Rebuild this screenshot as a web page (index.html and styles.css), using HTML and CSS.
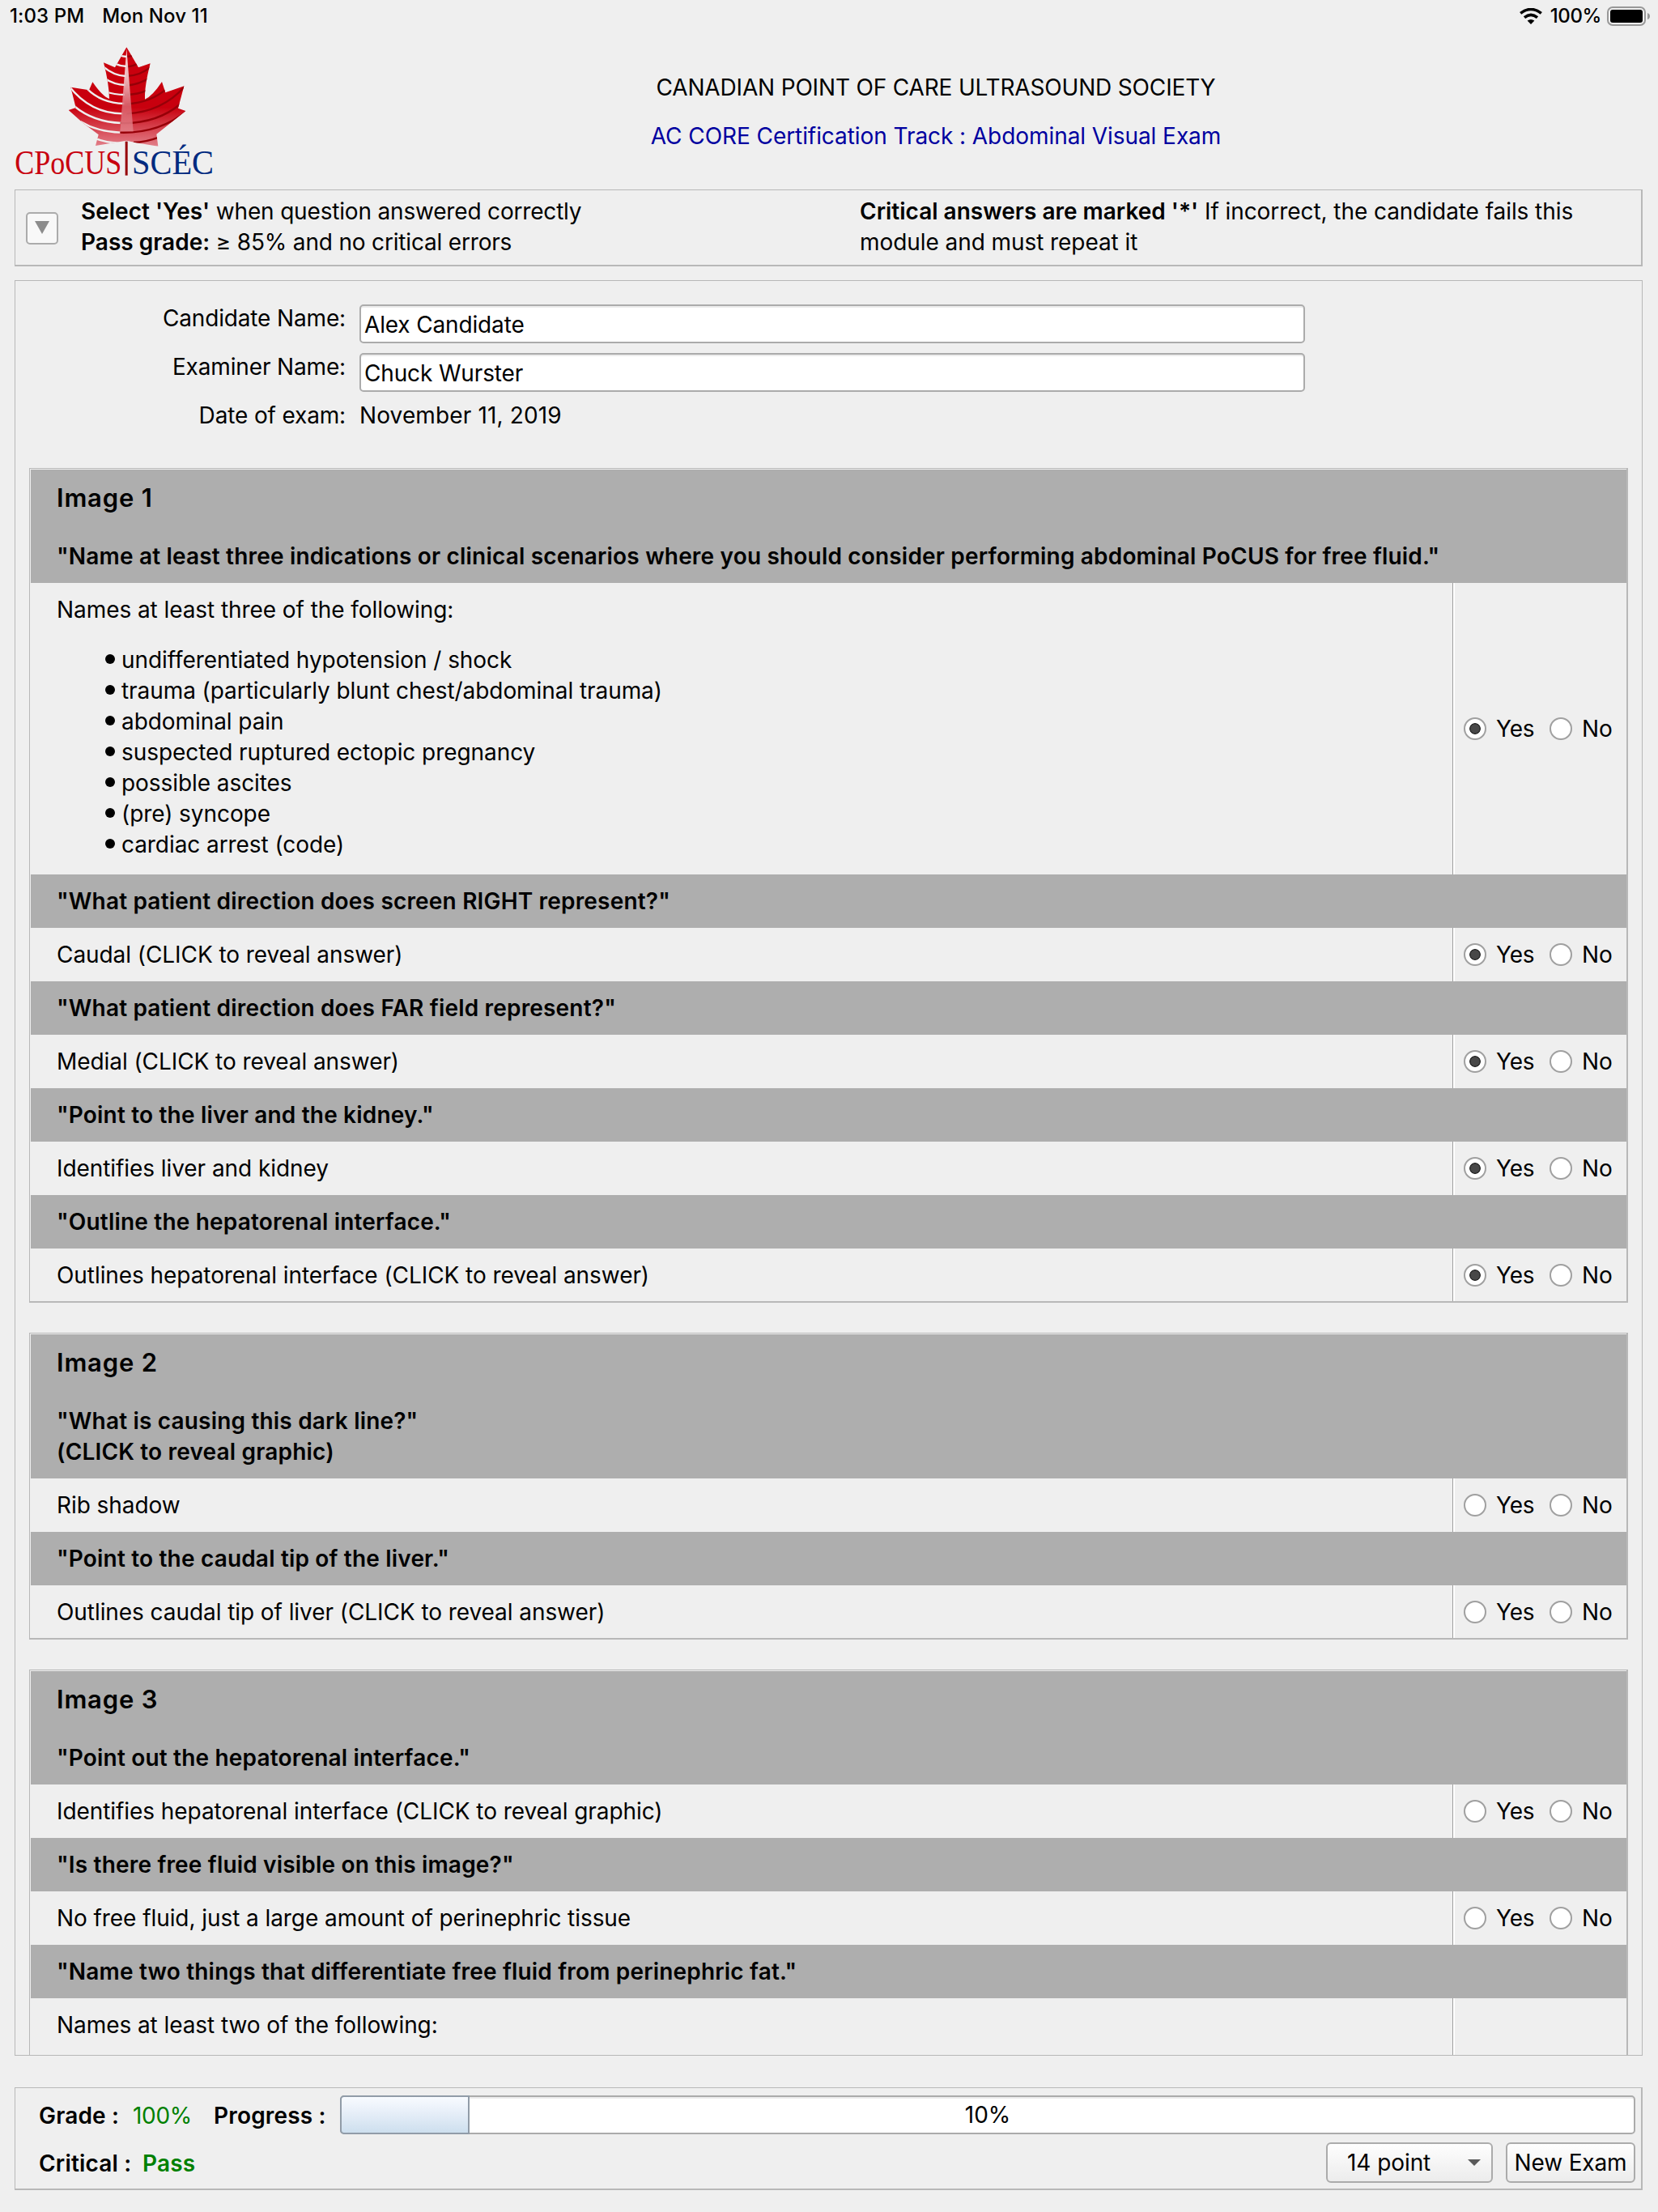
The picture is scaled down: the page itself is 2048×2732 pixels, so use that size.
FILE: index.html
```html
<!DOCTYPE html>
<html lang="en">
<head>
    <meta charset="utf-8">
    <title>Abdominal Visual Exam</title>
    <link rel="stylesheet" href="styles.css">
</head>
<body>
    <div class="status-bar">
        <span class="time">1:03 PM</span>
        <span class="date">Mon Nov 11</span>
        <svg class="wifi" viewBox="0 0 28 20" width="28" height="20">
            <g fill="none" stroke="#000" stroke-width="3.6">
                <path d="M1.2 6.4 Q14 -3.4 26.8 6.4"/>
                <path d="M6 11.7 Q14 5.2 22 11.7"/>
            </g>
            <path d="M9.6 15.6 Q14 12.2 18.4 15.6 L14 20 Z"/>
        </svg>
        <span class="battery-text">100%</span>
        <svg class="battery" viewBox="0 0 54 24" width="54" height="24">
            <rect x="1" y="1" width="46" height="22" rx="6" fill="none" stroke="#989898" stroke-width="2"/>
            <rect x="4" y="4" width="40" height="16" rx="3"/>
            <path d="M50 8 Q53 9 53 12 Q53 15 50 16 Z" fill="#989898"/>
        </svg>
    </div>

    <div class="header">
        <svg class="logo" viewBox="0 150 810 540" width="270" height="180">
            <defs>
                <linearGradient id="leafRed" x1="0" y1="0" x2="0" y2="1">
                    <stop offset="0" stop-color="#cb000e"/>
                    <stop offset="0.6" stop-color="#c8000e"/>
                    <stop offset="0.98" stop-color="#e2808a"/>
                </linearGradient>
                <linearGradient id="beam" x1="0" y1="0" x2="0" y2="1">
                    <stop offset="0" stop-color="#fff"/>
                    <stop offset="0.35" stop-color="#f3d8da"/>
                    <stop offset="0.7" stop-color="#db6670"/>
                    <stop offset="1" stop-color="#e28088"/>
                </linearGradient>
                <clipPath id="leaf">
                    <path d="M469 175 L513 250 L557 235 Q535 320 537 368 Q565 356 600 303 L613 343 L682 319 L660 401 L688 411 L580 497 L586 542 L500 528 L469 521 L413 530 L354 540 L365 499 L307 455 L254 408 L281 399 L262 323 L330 334 L343 304 Q380 358 405 366 Q404 310 384 232 L426 250 Z"/>
                </clipPath>
            </defs>
            <g clip-path="url(#leaf)">
                <rect x="250" y="170" width="440" height="380" fill="url(#leafRed)"/>
                <g fill="none" stroke="#efefef" stroke-width="7">
                    <path d="M440 203 Q455 210 469 210"/>
                    <path d="M425 236 Q448 246 469 246"/>
                    <path d="M380 245 Q422 281 466 282"/>
                    <path d="M385 289 Q424 315 464 315"/>
                    <path d="M390 339 Q424 351 462 351"/>
                    <path d="M322 328 Q375 382 460 384"/>
                    <path d="M255 318 Q335 421 455 421"/>
                    <path d="M275 393 Q345 452 450 456"/>
                    <path d="M298 450 Q360 488 446 491"/>
                    <path d="M350 512 Q395 530 445 530"/>
                </g>
                <g fill="none" stroke="#960008" stroke-width="7">
                    <path d="M469 210 Q485 210 500 203"/>
                    <path d="M469 247 Q495 246 520 232"/>
                    <path d="M469 282 Q520 280 560 247"/>
                    <path d="M469 317 Q515 314 560 286"/>
                    <path d="M469 351 Q510 350 545 335"/>
                    <path d="M469 385 Q560 380 618 328"/>
                    <path d="M469 421 Q600 415 685 320"/>
                    <path d="M446 456 Q580 460 670 384"/>
                    <path d="M445 491 Q590 495 695 409"/>
                    <path d="M495 528 Q540 527 590 508"/>
                </g>
                <path d="M469 180 L445 487 L494 487 Z" fill="url(#beam)" opacity="0.85"/>
            </g>
            <rect x="464" y="524" width="9" height="126" fill="#960008"/>
            <g class="logo-text">
                <text x="55" y="645" font-size="125" textLength="396" lengthAdjust="spacingAndGlyphs" fill="#c8000e">CPoCUS</text>
                <text x="489" y="646" font-size="125" textLength="303" lengthAdjust="spacingAndGlyphs" fill="#002a80">SCÉC</text>
            </g>
        </svg>
        <div class="titles">
            <div class="society">CANADIAN POINT OF CARE ULTRASOUND SOCIETY</div>
            <div class="track">AC CORE Certification Track : Abdominal Visual Exam</div>
        </div>
    </div>

    <div class="panel info">
        <button class="toggle"><svg viewBox="0 0 18 16" width="18" height="16"><path d="M0 0 H18 L9 16 Z" fill="#8c8c8c"/></svg></button>
        <div class="info-left"><b>Select 'Yes'</b> when question answered correctly<br><b>Pass grade:</b> ≥ 85% and no critical errors</div>
        <div class="info-right"><b>Critical answers are marked '*'</b> If incorrect, the candidate fails this<br>module and must repeat it</div>
    </div>

    <div class="exam">
        <div class="form">
            <label>Candidate Name:</label>
            <input type="text" value="Alex Candidate">
            <label>Examiner Name:</label>
            <input type="text" value="Chuck Wurster">
            <label>Date of exam:</label>
            <span class="exam-date">November 11, 2019</span>
        </div>

        <div class="group">
            <div class="question">
                <h2>Image 1</h2>
                <p>"Name at least three indications or clinical scenarios where you should consider performing abdominal PoCUS for free fluid."</p>
            </div>
            <div class="answer">
                <div class="text">
                    Names at least three of the following:
                    <ul>
                        <li>undifferentiated hypotension / shock</li>
                        <li>trauma (particularly blunt chest/abdominal trauma)</li>
                        <li>abdominal pain</li>
                        <li>suspected ruptured ectopic pregnancy</li>
                        <li>possible ascites</li>
                        <li>(pre) syncope</li>
                        <li>cardiac arrest (code)</li>
                    </ul>
                </div>
                <div class="choice">
                    <label><input type="radio" name="q1" checked>Yes</label>
                    <label><input type="radio" name="q1">No</label>
                </div>
            </div>
            <div class="question"><p>"What patient direction does screen RIGHT represent?"</p></div>
            <div class="answer">
                <div class="text">Caudal (CLICK to reveal answer)</div>
                <div class="choice">
                    <label><input type="radio" name="q2" checked>Yes</label>
                    <label><input type="radio" name="q2">No</label>
                </div>
            </div>
            <div class="question"><p>"What patient direction does FAR field represent?"</p></div>
            <div class="answer">
                <div class="text">Medial (CLICK to reveal answer)</div>
                <div class="choice">
                    <label><input type="radio" name="q3" checked>Yes</label>
                    <label><input type="radio" name="q3">No</label>
                </div>
            </div>
            <div class="question"><p>"Point to the liver and the kidney."</p></div>
            <div class="answer">
                <div class="text">Identifies liver and kidney</div>
                <div class="choice">
                    <label><input type="radio" name="q4" checked>Yes</label>
                    <label><input type="radio" name="q4">No</label>
                </div>
            </div>
            <div class="question"><p>"Outline the hepatorenal interface."</p></div>
            <div class="answer">
                <div class="text">Outlines hepatorenal interface (CLICK to reveal answer)</div>
                <div class="choice">
                    <label><input type="radio" name="q5" checked>Yes</label>
                    <label><input type="radio" name="q5">No</label>
                </div>
            </div>
        </div>

        <div class="group">
            <div class="question">
                <h2>Image 2</h2>
                <p>"What is causing this dark line?"<br>(CLICK to reveal graphic)</p>
            </div>
            <div class="answer">
                <div class="text">Rib shadow</div>
                <div class="choice">
                    <label><input type="radio" name="q6">Yes</label>
                    <label><input type="radio" name="q6">No</label>
                </div>
            </div>
            <div class="question"><p>"Point to the caudal tip of the liver."</p></div>
            <div class="answer">
                <div class="text">Outlines caudal tip of liver (CLICK to reveal answer)</div>
                <div class="choice">
                    <label><input type="radio" name="q7">Yes</label>
                    <label><input type="radio" name="q7">No</label>
                </div>
            </div>
        </div>

        <div class="group">
            <div class="question">
                <h2>Image 3</h2>
                <p>"Point out the hepatorenal interface."</p>
            </div>
            <div class="answer">
                <div class="text">Identifies hepatorenal interface (CLICK to reveal graphic)</div>
                <div class="choice">
                    <label><input type="radio" name="q8">Yes</label>
                    <label><input type="radio" name="q8">No</label>
                </div>
            </div>
            <div class="question"><p>"Is there free fluid visible on this image?"</p></div>
            <div class="answer">
                <div class="text">No free fluid, just a large amount of perinephric tissue</div>
                <div class="choice">
                    <label><input type="radio" name="q9">Yes</label>
                    <label><input type="radio" name="q9">No</label>
                </div>
            </div>
            <div class="question"><p>"Name two things that differentiate free fluid from perinephric fat."</p></div>
            <div class="answer cut">
                <div class="text">Names at least two of the following:</div>
                <div class="choice"></div>
            </div>
        </div>
    </div>

    <div class="panel footer">
        <div class="footer-row">
            <b class="grade">Grade :</b>
            <span class="grade-value">100%</span>
            <b class="progress-label">Progress :</b>
            <div class="progress">
                <div class="progress-fill"></div>
                <span>10%</span>
            </div>
        </div>
        <div class="footer-row">
            <b class="critical">Critical :</b>
            <b class="pass">Pass</b>
            <button class="size">14 point<svg viewBox="0 0 16 8" width="16" height="8"><path d="M0 0 H16 L8 8 Z" fill="#5a5a5a"/></svg></button>
            <button class="new-exam">New Exam</button>
        </div>
    </div>
</body>
</html>
```

FILE: styles.css
```css
* {
    box-sizing: border-box;
}

body {
    width: 2048px;
    height: 2732px;
    margin: 0;
    overflow: hidden;
    background: #efefef;
    color: #000;
    font-family: Inter, "Liberation Sans", sans-serif;
    font-size: 28px;
    line-height: 38px;
    letter-spacing: -0.07px;
}

b, h2, .question p {
    font-weight: 600;
    letter-spacing: 0.18px;
}

h2, p, ul {
    margin: 0;
}

button, input {
    font: inherit;
    color: inherit;
    letter-spacing: inherit;
}

/* iPad status bar */
.status-bar {
    display: flex;
    align-items: center;
    height: 40px;
    padding: 0 9px 0 12px;
    font-size: 24px;
    font-weight: 500;
    letter-spacing: 0.1px;
    white-space: nowrap;
}

.date {
    margin-left: 22px;
}

.wifi {
    margin-left: auto;
}

.battery-text {
    margin: 0 7px 0 10px;
    letter-spacing: -0.4px;
}

/* logo and titles */
.header {
    display: flex;
    height: 194px;
    padding-top: 10px;
}

.logo {
    flex: none;
}

.logo-text {
    font-family: "Liberation Serif", serif;
    letter-spacing: 0;
}

.titles {
    width: 1772px;
    padding-top: 39px;
    text-align: center;
}

.society {
    letter-spacing: -0.17px;
}

.track {
    margin-top: 22px;
    color: #0000a0;
}

.panel {
    margin: 0 19px 0 18px;
    border: 1px solid #b8b8b8;
    border-right-width: 2px;
    border-bottom-width: 2px;
}

.info {
    display: flex;
    height: 95px;
    padding: 7px 0 0 13px;
    white-space: nowrap;
}

.toggle {
    display: flex;
    align-items: center;
    justify-content: center;
    width: 40px;
    height: 40px;
    margin-top: 20px;
    padding: 0 0 2px;
    border: 2px solid #ababab;
    border-radius: 5px;
    background: #f8f8f8;
}

.info-left {
    width: 962px;
    margin-left: 28px;
    letter-spacing: -0.18px;
}

.info b {
    letter-spacing: 0;
}

/* scrolling exam area */
.exam {
    height: 2193px;
    margin: 17px 19px 0 18px;
    padding: 27px 17px 0;
    border: 1px solid #b8b8b8;
    overflow: hidden;
}

.form {
    display: grid;
    grid-template-columns: 391px 1168px;
    grid-auto-rows: 60px;
    column-gap: 17px;
    margin-bottom: 24px;
}

.form label {
    text-align: right;
    letter-spacing: -0.15px;
}

.form input {
    height: 48px;
    margin-top: 2px;
    padding: 2px 4px 0;
    border: 2px solid #ababab;
    border-radius: 5px;
    background: #fff;
    box-shadow: inset 0 2px 0 #ececec;
    letter-spacing: -0.15px;
}

.exam-date {
    letter-spacing: 0.13px;
}

.group {
    margin-bottom: 37px;
    padding: 1px 0 0 1px;
    border: 1px solid #b8b8b8;
    border-right-width: 2px;
    border-bottom-width: 2px;
}

.question {
    padding: 14px 32px;
    background: #aeaeae;
}

.question h2 {
    height: 74px;
    padding-top: 2px;
    font-size: 31px;
    letter-spacing: 0.8px;
}

.question p {
    white-space: nowrap;
}

.answer {
    display: flex;
}

.text {
    flex: 1;
    padding: 14px 32px;
}

.answer:last-child .text {
    padding-bottom: 13px;
}

.text ul {
    padding: 24px 0 4px 80px;
    list-style: none;
}

.text li::before {
    content: "";
    display: inline-block;
    width: 12px;
    height: 12px;
    margin: 0 8px 5px -20px;
    border-radius: 50%;
    background: #000;
    vertical-align: baseline;
}

.choice {
    display: flex;
    align-items: center;
    width: 215px;
    padding-left: 13px;
    border-left: 1px solid #a0a0a0;
    box-shadow: inset 2px 0 0 #fff;
}

.choice label {
    display: flex;
    align-items: center;
    width: 106px;
    letter-spacing: -0.2px;
    white-space: nowrap;
}

.choice label + label {
    width: auto;
}

.choice input {
    flex: none;
    width: 28px;
    height: 28px;
    margin: 0 12px 0 0;
    border: 2px solid #a0a0a0;
    border-radius: 50%;
    background: #fff;
    appearance: none;
}

.choice input:checked {
    background: radial-gradient(circle, #484848 0, #484848 5px, #2c2c2c 6px, #2c2c2c 6.5px, #fff 7.2px);
}

/* last row runs past the bottom of the scroll area */
.cut {
    height: 120px;
}

/* footer */
.footer {
    height: 127px;
    margin-top: 39px;
    padding: 9px 7px 0 29px;
}

.footer-row {
    display: flex;
    align-items: center;
    height: 48px;
    white-space: nowrap;
}

.footer-row + .footer-row {
    height: 50px;
    margin-top: 10px;
}

.footer-row > b, .grade-value {
    padding-top: 1px;
}

.grade {
    width: 116px;
}

.grade-value {
    width: 100px;
    color: #008000;
    letter-spacing: -0.3px;
}

.progress-label {
    width: 156px;
}

.progress {
    position: relative;
    flex: 1;
    height: 48px;
    border: 2px solid #ababab;
    border-radius: 5px;
    background: #fff;
    box-shadow: inset 0 2px 0 #ececec;
    line-height: 45px;
    text-align: center;
}

/* the filled part lies over the track */
.progress-fill {
    position: absolute;
    left: -2px;
    top: -2px;
    width: 160px;
    height: 48px;
    border: 2px solid #919ca8;
    border-radius: 5px 0 0 5px;
    background: linear-gradient(#f8fbff, #e6eef8 45%, #cddfee);
}

.critical {
    width: 128px;
}

.pass {
    color: #008000;
}

.size, .new-exam {
    height: 50px;
    border: 2px solid #ababab;
    border-radius: 6px;
    background: linear-gradient(#fefefe, #ececec);
}

.size {
    display: flex;
    align-items: center;
    justify-content: space-between;
    width: 206px;
    margin-left: auto;
    padding: 0 13px 0 24px;
}

.new-exam {
    width: 160px;
    margin-left: 16px;
    padding: 0;
    letter-spacing: -0.15px;
}
```
